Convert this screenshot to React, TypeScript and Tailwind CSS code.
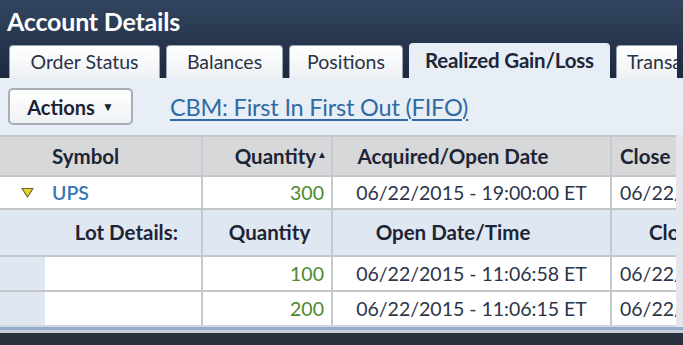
const font = { fontFamily: 'Lato, "Open Sans", sans-serif' };

const tabs = [
  { label: 'Order Status', w: 'w-[151px]' },
  { label: 'Balances', w: 'w-[117px]' },
  { label: 'Positions', w: 'w-[114px]' },
  { label: 'Realized Gain/Loss', w: 'w-[201px]', active: true },
  { label: 'Transactions', w: 'w-[80px]' },
];

function Tabs() {
  return (
    <div className="w-[677px] overflow-hidden flex items-end gap-[6px] pl-[9px] h-[35px]">
      {tabs.map(t =>
        t.active ? (
          <div
            key={t.label}
            className={`${t.w} shrink-0 h-[35px] rounded-t-[4px] bg-[#e8eef6] flex items-center justify-center text-[20.5px] font-bold text-[#1e2638] tracking-[-0.2px]`}
          >
            {t.label}
          </div>
        ) : (
          <div
            key={t.label}
            className={`${t.w} shrink-0 h-[33px] overflow-hidden whitespace-nowrap rounded-t-[4px] border border-b-0 border-[#9aa3b3] bg-gradient-to-b from-white to-[#eef1f5] flex items-center text-[19.5px] text-[#2a3246] ${t.label === 'Transactions' ? 'justify-start pl-[10px]' : 'justify-center'}`}
          >
            {t.label}
          </div>
        )
      )}
    </div>
  );
}

function Triangle() {
  return (
    <svg width="13" height="11" viewBox="0 0 13 11" className="shrink-0">
      <path d="M1 1.5 H12 L6.5 10 Z" fill="#e8d72a" stroke="#6b6430" strokeWidth="1.2" strokeLinejoin="round" />
    </svg>
  );
}

const cols = 'grid grid-cols-[203px_130px_279px_1fr]';
const cell = 'border-r-2 border-[#c6c9ce] flex items-center';
const last = 'flex items-center overflow-hidden whitespace-nowrap';

export default function App() {
  return (
    <div className="w-[683px] h-[345px] overflow-hidden bg-[#e8eef6] text-[19.5px]" style={font}>
      <div className="bg-gradient-to-b from-[#33455f] to-[#1c2a40]">
        <div className="h-[43px] pl-[7px] flex items-center text-white font-bold text-[25px] tracking-[-0.2px]">
          Account Details
        </div>
        <Tabs />
      </div>

      <div className="h-[57px] flex items-center pl-[8px] gap-[37px]">
        <button className="w-[125px] h-[37px] rounded-[5px] border-2 border-[#a9adb4] bg-gradient-to-b from-white to-[#eef1f4] flex items-center justify-center gap-[7px] font-bold text-[20px] text-[#1b2233]">
          Actions
          <span className="text-[12px]">▼</span>
        </button>
        <span className="text-[#2f6aa3] underline decoration-[1.5px] underline-offset-[3px] text-[23.5px] mt-[2px] tracking-[-0.2px]">
          CBM: First In First Out (FIFO)
        </span>
      </div>

      <div className="flex">
        <div className="w-[676px] shrink-0 border-t-2 border-[#c4c6ca]">
          <div className={`${cols} h-[40px] bg-[#d7d8da] border-b-2 border-[#c4c6ca] font-bold text-[20.5px] text-[#1d2434]`}>
            <div className={`${cell} pl-[52px]`}>Symbol</div>
            <div className={`${cell} justify-end pr-[4px]`}>
              Quantity<span className="text-[10px] ml-[1px] -mt-[4px]">▲</span>
            </div>
            <div className={`${cell} justify-center pr-[37px]`}>Acquired/Open Date</div>
            <div className={`${last} pl-[8px]`}>Close Date</div>
          </div>

          <div className={`${cols} h-[33px] bg-white border-b-2 border-[#c4c6ca]`}>
            <div className={`${cell} pl-[21px] gap-[18px]`}>
              <Triangle />
              <span className="text-[#3776b5] font-semibold">UPS</span>
            </div>
            <div className={`${cell} justify-end pr-[7px] text-[#4b8a2e]`}>300</div>
            <div className={`${cell} justify-center text-[#2c3447]`}>06/22/2015 - 19:00:00 ET</div>
            <div className={`${last} pl-[8px] text-[#2c3447]`}>06/22/2015</div>
          </div>

          <div className={`${cols} h-[47px] bg-[#dfe7f2] border-b-2 border-[#c4c6ca] font-bold text-[20.5px] text-[#1d2434]`}>
            <div className={`${cell} justify-end pr-[23px]`}>Lot Details:</div>
            <div className={`${cell} justify-center pl-[5px]`}>Quantity</div>
            <div className={`${cell} justify-center pr-[37px]`}>Open Date/Time</div>
            <div className={`${last} pl-[37px]`}>Close Date/Time</div>
          </div>

          {[
            ['100', '06/22/2015 - 11:06:58 ET'],
            ['200', '06/22/2015 - 11:06:15 ET'],
          ].map(([q, d], i) => (
            <div
              key={q}
              className={`${cols} h-[35px] bg-white border-b-2 ${i === 0 ? 'border-[#c4c6ca]' : 'border-[#d3d8de]'}`}
            >
              <div className={`${cell} items-stretch`}>
                <div className="w-[45px] bg-[#dfe7f2]" />
              </div>
              <div className={`${cell} justify-end pr-[7px] text-[#4b8a2e]`}>{q}</div>
              <div className={`${cell} justify-center text-[#2c3447]`}>{d}</div>
              <div className={`${last} pl-[8px] text-[#2c3447]`}>06/22/2015</div>
            </div>
          ))}
        </div>
        <div className="flex-1 bg-[#e3e6ea]" />
      </div>

      <div className="h-[3px] bg-[#8fabcf]" />
      <div className="h-[3px] bg-[#c9cdd3]" />
      <div className="h-[20px] bg-[#29313f]" />
    </div>
  );
}
